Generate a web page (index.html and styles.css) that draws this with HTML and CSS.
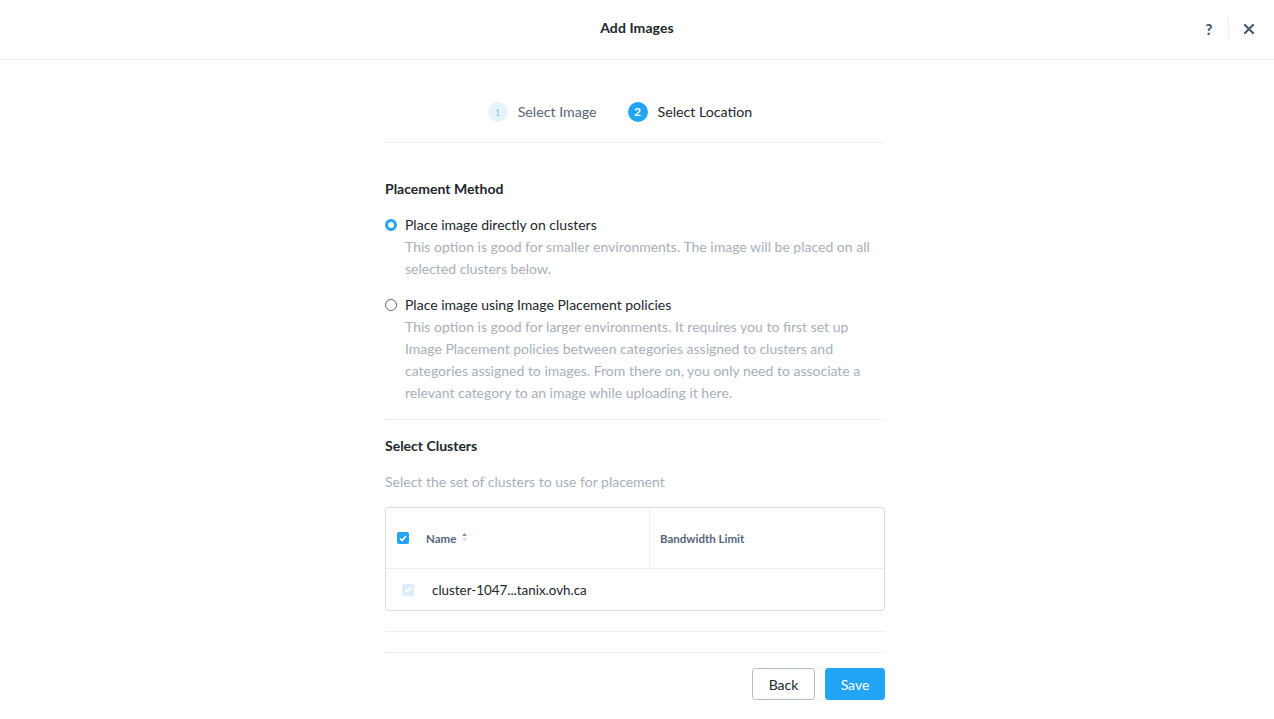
FILE: index.html
```html
<!DOCTYPE html>
<html>
<head>
<meta charset="utf-8">
<link rel="stylesheet" href="styles.css">
</head>
<body>
<header class="header">
  <div class="title">Add Images</div>
  <div class="header-actions">
    <span class="help">?</span>
    <span class="sep"></span>
    <svg class="close" width="12" height="12" viewBox="0 0 12 12"><path d="M2 2L10 10M10 2L2 10" stroke="#4a5a70" stroke-width="2.2" stroke-linecap="round"/></svg>
  </div>
</header>
<main class="content">
  <div class="steps">
    <div class="step done"><span class="num">1</span><span class="label">Select Image</span></div>
    <div class="step active"><span class="num">2</span><span class="label">Select Location</span></div>
  </div>
  <section class="placement">
    <h3 class="section-title">Placement Method</h3>
    <div class="option">
      <span class="radio checked"></span>
      <div class="option-text">
        <div class="option-label">Place image directly on clusters</div>
        <div class="option-desc">This option is good for smaller environments. The image will be placed on all selected clusters below.</div>
      </div>
    </div>
    <div class="option">
      <span class="radio"></span>
      <div class="option-text">
        <div class="option-label">Place image using Image Placement policies</div>
        <div class="option-desc">This option is good for larger environments. It requires you to first set up Image Placement policies between categories assigned to clusters and categories assigned to images. From there on, you only need to associate a relevant category to an image while uploading it here.</div>
      </div>
    </div>
  </section>
  <section class="clusters">
    <h3 class="section-title">Select Clusters</h3>
    <div class="subtitle">Select the set of clusters to use for placement</div>
    <div class="table">
      <div class="thead">
        <div class="th th-name">
          <span class="cb checked"><svg width="8" height="7" viewBox="0 0 8 7"><path d="M1 3.5L3 5.5L7 1" stroke="#fff" stroke-width="1.6" fill="none"/></svg></span>
          <span>Name</span>
          <svg class="sort" width="5" height="8" viewBox="0 0 5 8"><path d="M2.5 0L5 3H0Z" fill="#8a96a8"/><path d="M2.5 8L5 5H0Z" fill="#d0d6de"/></svg>
        </div>
        <div class="th th-bw">Bandwidth Limit</div>
      </div>
      <div class="row">
        <span class="cb disabled"><svg width="8" height="7" viewBox="0 0 8 7"><path d="M1 3.5L3 5.5L7 1" stroke="#fff" stroke-width="1.6" fill="none"/></svg></span>
        <span class="cluster">cluster-1047...tanix.ovh.ca</span>
      </div>
    </div>
  </section>
  <div class="spacer"></div>
  <footer class="footer">
    <button class="btn back">Back</button>
    <button class="btn save">Save</button>
  </footer>
</main>
</body>
</html>
```
FILE: styles.css
```css
* { box-sizing: border-box; }
html, body { margin: 0; padding: 0; background: #fff; }
body {
  font-family: Lato, "Open Sans", "Liberation Sans", sans-serif;
  color: #22272e;
  width: 1274px;
  height: 719px;
  overflow: hidden;
}
.header {
  height: 60px;
  border-bottom: 1px solid #eceff3;
  display: flex;
  align-items: center;
  justify-content: center;
  position: relative;
  padding-bottom: 4px;
}
.title { font-size: 14px; font-weight: 700; color: #22272e; letter-spacing: 0.1px; }
.header-actions {
  position: absolute;
  right: 19px;
  top: 0;
  height: 58px;
  display: flex;
  align-items: center;
}
.help { font-size: 15px; font-weight: 900; color: #4a5a70; width: 14px; text-align: center; margin-right: 1px; }
.sep { width: 1px; height: 22px; background: #eceff3; margin: 0 14px 0 11px; }
.close { display: block; }
.content { width: 500px; margin-left: 385px; display: flex; flex-direction: column; }
.steps {
  height: 83px;
  border-bottom: 1px solid #eceff3;
  display: flex;
  justify-content: center;
  align-items: center;
  padding-top: 21px;
  gap: 31px;
  padding-right: 30px;
}
.step { display: flex; align-items: center; font-size: 14.2px; }
.num {
  width: 20px; height: 20px; border-radius: 50%;
  display: inline-flex; align-items: center; justify-content: center;
  font-size: 10px; margin-right: 10px; font-weight: 700;
}
.step.done .num { background: #e6f3fd; color: #8ec8f4; font-weight: 400; }
.step.done .label { color: #55657c; }
.step.active .num { background: #22a5f7; color: #fff; font-size: 12px; }
.step.active .label { color: #22272e; }
.section-title { font-size: 14px; font-weight: 700; margin: 0; color: #22272e; line-height: 18px; }
.placement { padding-top: 37px; border-bottom: 1px solid #eceff3; padding-bottom: 15px; }
.placement .section-title { margin-bottom: 16px; }
.option { display: flex; margin-bottom: 14px; }
.option:last-child { margin-bottom: 0; }
.radio {
  width: 12px; height: 12px; border-radius: 50%;
  border: 1px solid #5a6a80; margin-right: 8px; margin-top: 5px; flex: none;
  background: #fff;
}
.radio.checked { border: 3.5px solid #22a5f7; }
.option-label { font-size: 14px; color: #22272e; line-height: 22px; }
.option-desc { font-size: 14px; color: #a7b0bd; line-height: 22px; }
.clusters { padding-top: 17px; }
.subtitle { font-size: 14px; color: #a7b0bd; margin-top: 18px; line-height: 18px; }
.table {
  margin-top: 16px;
  border: 1px solid #d8dde4;
  border-radius: 3px;
}
.thead { display: flex; height: 61px; border-bottom: 1px solid #eceff3; }
.th { display: flex; align-items: center; font-size: 11.5px; font-weight: 700; color: #55657c; }
.th-name { width: 264px; border-right: 1px solid #eceff3; padding-left: 11px; }
.th-name .cb { margin-right: 17px; }
.sort { margin-left: 6px; margin-bottom: 2px; }
.th-bw { padding-left: 10px; }
.cb {
  width: 12px; height: 12px; border-radius: 2px;
  display: inline-flex; align-items: center; justify-content: center; flex: none;
}
.cb.checked { background: #22a5f7; }
.cb.disabled { background: #dcedfb; }
.row { height: 41px; display: flex; align-items: center; padding-left: 16px; }
.row .cb { margin-right: 18px; }
.cluster { font-size: 13.4px; color: #22272e; }
.spacer { height: 21px; border-bottom: 1px solid #eceff3; margin-bottom: 20px; }
.footer { border-top: 1px solid #eceff3; display: flex; justify-content: flex-end; gap: 10px; padding-top: 15px; }
.btn {
  height: 32px; font-family: inherit; font-size: 14px; border-radius: 3px; cursor: pointer;
}
.back { width: 63px; background: #fff; border: 1px solid #b8c0cc; color: #22272e; }
.save { width: 60px; background: #22a5f7; border: 1px solid #22a5f7; color: #fff; }
```
